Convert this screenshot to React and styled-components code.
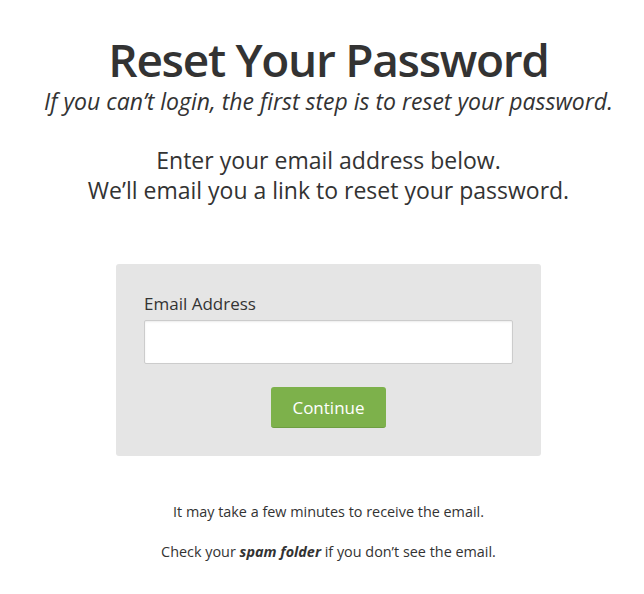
import React from "react";
import styled, { createGlobalStyle } from "styled-components";

const GlobalStyle = createGlobalStyle`
  html, body {
    margin: 0;
    padding: 0;
    background: #ffffff;
  }
  body {
    font-family: "Open Sans", "Liberation Sans", sans-serif;
    color: #333333;
  }
`;

const Page = styled.main`
  display: flex;
  flex-direction: column;
  align-items: center;
  padding: 33px 0 0 13px;
  text-align: center;
`;

const Title = styled.h1`
  margin: 0;
  font-size: 46px;
  line-height: 53px;
  font-weight: 600;
  letter-spacing: -1.3px;
  color: #333333;
`;

const Subtitle = styled.p`
  margin: 0;
  font-size: 23px;
  line-height: 30px;
  font-style: italic;
  color: #333333;
`;

const Intro = styled.p`
  margin: 29px 0 0;
  font-size: 23px;
  line-height: 30px;
  color: #333333;
`;

const Card = styled.form`
  display: flex;
  flex-direction: column;
  width: 425px;
  box-sizing: border-box;
  margin-top: 59px;
  padding: 28px 28px 28px;
  background: #e5e5e5;
  border-radius: 3px;
  text-align: left;
`;

const Label = styled.label`
  font-size: 17px;
  line-height: 23px;
  color: #333333;
`;

const Input = styled.input`
  margin-top: 5px;
  height: 44px;
  box-sizing: border-box;
  border: 1px solid #cccccc;
  border-radius: 2px;
  background: #ffffff;
  box-shadow: inset 0 1px 2px rgba(0, 0, 0, 0.08);
  padding: 0 10px;
  font-family: inherit;
  font-size: 16px;
  outline: none;
`;

const Button = styled.button`
  align-self: center;
  margin-top: 23px;
  height: 41px;
  padding: 0 21px;
  border: none;
  border-bottom: 1px solid #6e9e42;
  border-radius: 3px;
  background: #7db14b;
  color: #ffffff;
  font-family: inherit;
  font-size: 17px;
  cursor: pointer;
`;

const Note = styled.p`
  margin: ${(p) => p.$top}px 0 0;
  font-size: 14.4px;
  line-height: 18px;
  color: #333333;
`;

const App = () => {
  return (
    <>
      <GlobalStyle />
      <Page>
        <Title>Reset Your Password</Title>
        <Subtitle>If you can’t login, the first step is to reset your password.</Subtitle>
        <Intro>
          Enter your email address below.
          <br />
          We’ll email you a link to reset your password.
        </Intro>
        <Card onSubmit={(e) => e.preventDefault()}>
          <Label htmlFor="email">Email Address</Label>
          <Input id="email" type="email" />
          <Button type="submit">Continue</Button>
        </Card>
        <Note $top={47}>It may take a few minutes to receive the email.</Note>
        <Note $top={22}>
          Check your <b><i>spam folder</i></b> if you don’t see the email.
        </Note>
      </Page>
    </>
  );
};

export default App;
